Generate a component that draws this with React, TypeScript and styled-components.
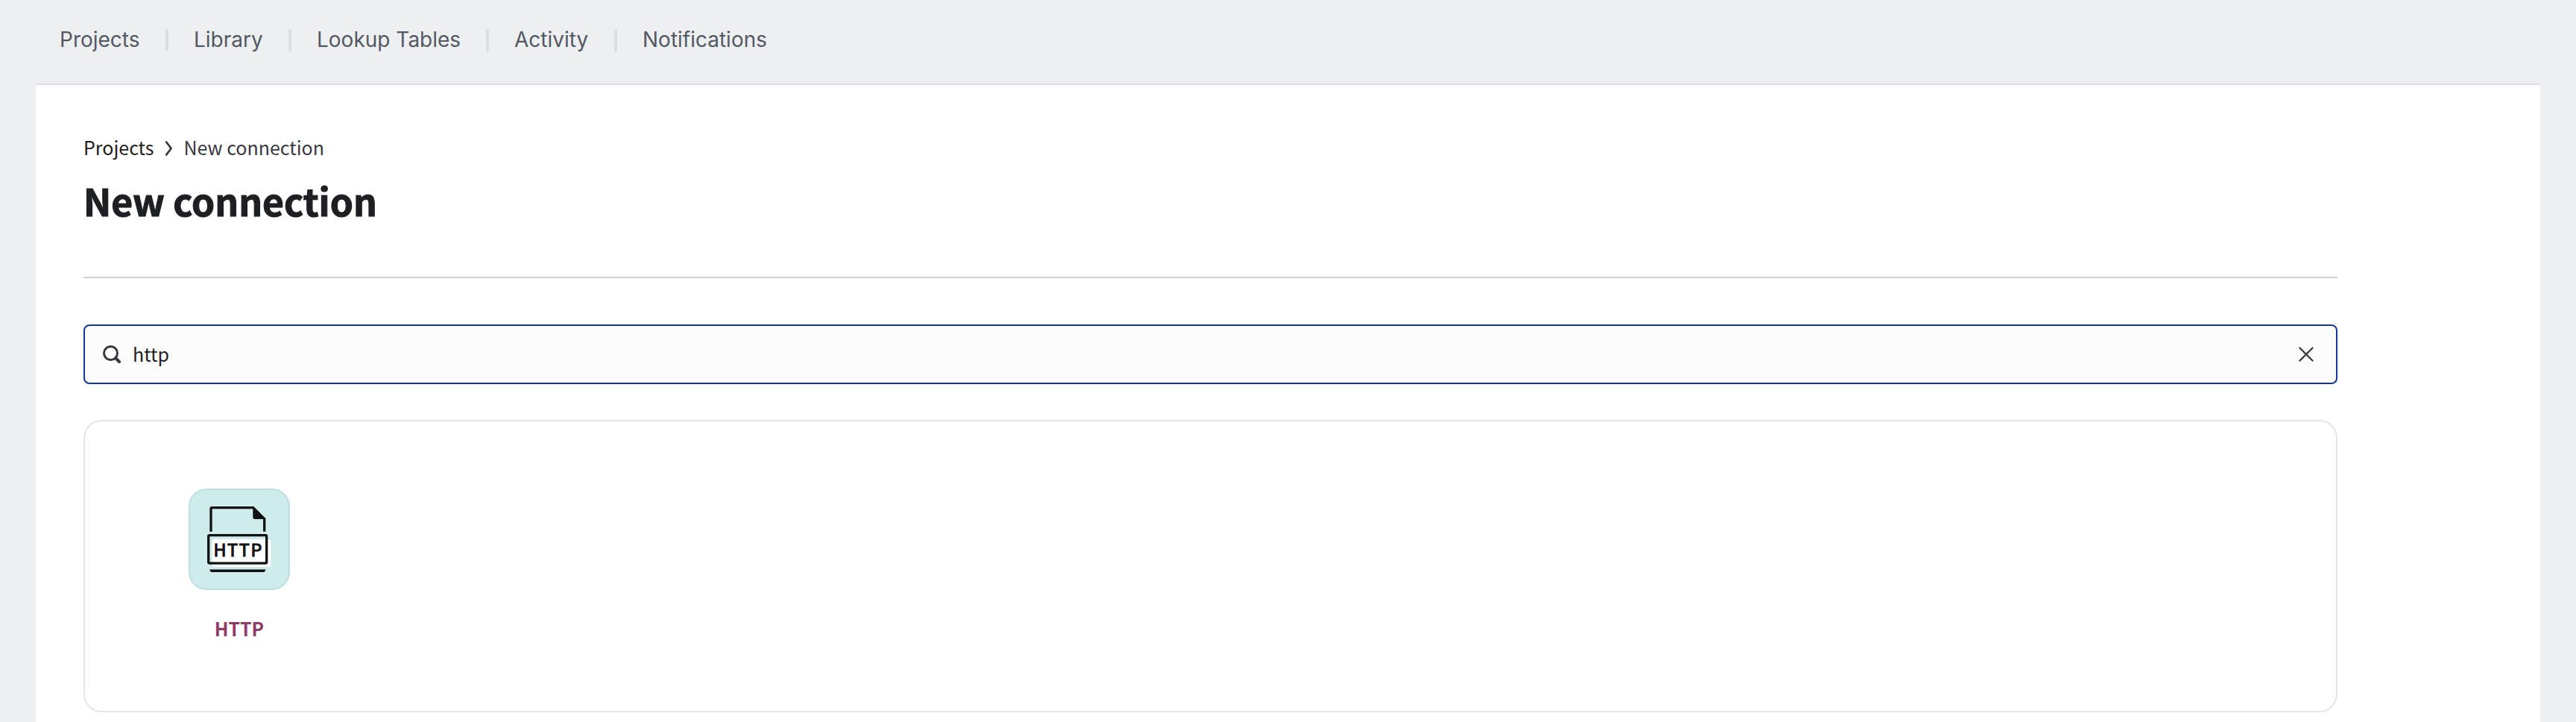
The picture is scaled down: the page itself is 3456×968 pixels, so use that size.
import React from "react";
import styled, { createGlobalStyle } from "styled-components";

const sans = `"Noto Sans CJK SC", "Noto Sans", sans-serif`;

const GlobalStyle = createGlobalStyle`
  *, *::before, *::after { box-sizing: border-box; }
  body { margin: 0; background: #eeeff1; }
`;

const Page = styled.div`
  display: flex;
  flex-direction: column;
  height: 968px;
  padding: 0 48px;
  overflow: hidden;
  background: #eeeff1;
`;

const Nav = styled.nav`
  display: flex;
  align-items: center;
  gap: 34px;
  height: 112px;
  padding: 0 32px 4px;
  flex: none;
`;

const NavLink = styled.a<{ $width: number }>`
  width: ${(p) => p.$width}px;
  padding-bottom: 2px;
  font: 400 28px/36px Inter, sans-serif;
  color: #535964;
  white-space: nowrap;
`;

const Divider = styled.span`
  width: 4px;
  height: 30px;
  border-radius: 2px;
  background: #dcdde0;
`;

const Panel = styled.main`
  flex: 1;
  border-top: 2px solid #dcdce2;
  padding: 62px 272px 0 64px;
  background: #fff;
`;

const Breadcrumb = styled.div`
  display: flex;
  align-items: center;
  height: 42px;
  font: 400 25px/42px ${sans};
  color: #38383f;
`;

const Crumb = styled.a`
  color: #1d1d21;
`;

const Chevron = styled.svg`
  display: block;
  margin: 4px 12px 0 14px;
`;

const Title = styled.h1`
  margin: 10px 0 0;
  height: 80px;
  font: 700 49.8px/80px ${sans};
  -webkit-text-stroke: 1.1px #1e1f23;
  color: #1e1f23;
`;

const Rule = styled.hr`
  height: 2px;
  margin: 63px 0 62px;
  border: 0;
  background: #ced3d9;
`;

const SearchBox = styled.label`
  display: flex;
  align-items: center;
  height: 80px;
  padding: 0 30px 0 24px;
  border: 2px solid #13369c;
  border-radius: 8px;
  background: #fcfcfc;
`;

const SearchInput = styled.input`
  flex: 1;
  height: 60px;
  margin-left: 16px;
  padding: 0 0 2px;
  border: 0;
  outline: 0;
  background: transparent;
  font: 400 25px/58px ${sans};
  color: #1e1f23;
`;

const Results = styled.section`
  height: 392px;
  margin-top: 48px;
  padding: 90px 104px;
  border: 2px solid #e2e6ea;
  border-radius: 24px;
`;

const Connector = styled.a`
  display: flex;
  flex-direction: column;
  align-items: center;
  width: 206px;
`;

const Tile = styled.span`
  display: flex;
  width: 136px;
  height: 136px;
  border: 2px solid #bfdedf;
  border-radius: 24px;
  background: #ceecec;
`;

const TileArt = styled.svg`
  display: block;
  flex: none;
  margin: -2px;
`;

const ConnectorName = styled.span`
  margin-top: 31px;
  font: 700 24.8px/40px ${sans};
  color: #8f3a69;
`;

const links = [
  { label: "Projects", width: 108 },
  { label: "Library", width: 93 },
  { label: "Lookup Tables", width: 193 },
  { label: "Activity", width: 100 },
  { label: "Notifications", width: 170 },
];

export default function App() {
  return (
    <>
      <GlobalStyle />
      <Page>
        <Nav>
          {links.map((l, i) => (
            <React.Fragment key={l.label}>
              {i > 0 && <Divider />}
              <NavLink $width={l.width}>{l.label}</NavLink>
            </React.Fragment>
          ))}
        </Nav>
        <Panel>
          <Breadcrumb>
            <Crumb>Projects</Crumb>
            <Chevron width="14" height="22" viewBox="0 0 14 22" fill="none" stroke="#38383f" strokeWidth="2.8" strokeLinecap="round" strokeLinejoin="round">
              <path d="M3.2 2.5L9.6 11L3.2 19.5" />
            </Chevron>
            <span>New connection</span>
          </Breadcrumb>
          <Title>New connection</Title>
          <Rule />
          <SearchBox>
            <svg width="24" height="24" viewBox="0 0 24 24" fill="none" stroke="#38383d" strokeLinecap="round">
              <circle cx="10.5" cy="10.5" r="9" strokeWidth="2.9" />
              <path d="M17.5 17.5L22 22" strokeWidth="4" />
            </svg>
            <SearchInput defaultValue="http" />
            <svg width="20" height="20" viewBox="0 0 20 20" stroke="#38383d" strokeWidth="2.3" strokeLinecap="round">
              <path d="M1.5 1.5L18.5 18.5M18.5 1.5L1.5 18.5" />
            </svg>
          </SearchBox>
          <Results>
            <Connector>
              <Tile>
                <TileArt width="136" height="136" viewBox="0 0 136 136">
                  <rect x="31.7" y="68" width="78.6" height="37" rx="2.5" fill="#fff" />
                  <g fill="none" stroke="#111" strokeWidth="3.3">
                    <path d="M30 57.7V27Q30 25.7 31.5 25.7H87" />
                    <path d="M101.7 57.7V40" />
                    <rect x="26.7" y="62.7" width="78" height="37.4" rx="1.5" />
                  </g>
                  <path d="M86.3 24H87.3L103.3 40V41H89Q86.3 41 86.3 38.3Z" fill="#111" />
                  <path d="M28.3 108.4H103.3Q102.8 112 100 112H31.6Q28.8 112 28.3 108.4Z" fill="#111" />
                  <text x="33.4" y="91.3" fontFamily={sans} fontSize="23.4" fontWeight="400" letterSpacing="1.7" fill="#111" stroke="#111" strokeWidth="1.1">HTTP</text>
                </TileArt>
              </Tile>
              <ConnectorName>HTTP</ConnectorName>
            </Connector>
          </Results>
        </Panel>
      </Page>
    </>
  );
}
